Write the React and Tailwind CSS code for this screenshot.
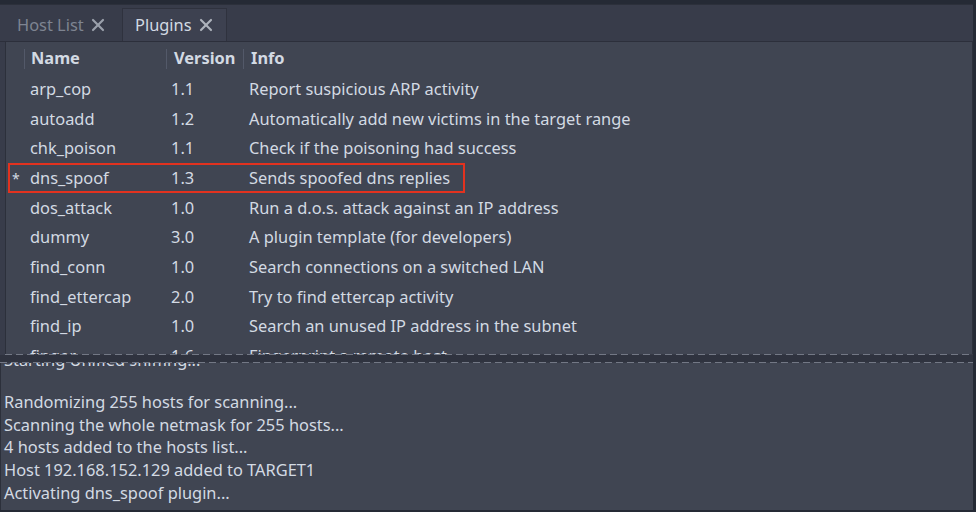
import { X } from 'lucide-react'

const plugins = [
  { name: 'arp_cop', ver: '1.1', info: 'Report suspicious ARP activity' },
  { name: 'autoadd', ver: '1.2', info: 'Automatically add new victims in the target range' },
  { name: 'chk_poison', ver: '1.1', info: 'Check if the poisoning had success' },
  { name: 'dns_spoof', ver: '1.3', info: 'Sends spoofed dns replies', active: true },
  { name: 'dos_attack', ver: '1.0', info: 'Run a d.o.s. attack against an IP address' },
  { name: 'dummy', ver: '3.0', info: 'A plugin template (for developers)' },
  { name: 'find_conn', ver: '1.0', info: 'Search connections on a switched LAN' },
  { name: 'find_ettercap', ver: '2.0', info: 'Try to find ettercap activity' },
  { name: 'find_ip', ver: '1.0', info: 'Search an unused IP address in the subnet' },
  { name: 'finger', ver: '1.6', info: 'Fingerprint a remote host' },
  { name: 'finger_submit', ver: '1.0', info: "Submit a fingerprint to ettercap's website" },
]

const logLines = [
  'Randomizing 255 hosts for scanning...',
  'Scanning the whole netmask for 255 hosts...',
  '4 hosts added to the hosts list...',
  'Host 192.168.152.129 added to TARGET1',
  'Activating dns_spoof plugin...',
]

const dashed = 'h-[1px] shrink-0 bg-[repeating-linear-gradient(90deg,#737885_0px,#737885_7px,#363a46_7px,#363a46_11px)]'

export default function App() {
  return (
    <div className="w-[976px] h-[512px] bg-[#252a35] overflow-hidden text-[#d3dae3] text-[16.4px] font-['Noto_Sans',sans-serif]">
      <div className="mt-[4px] mr-[3px] h-[506px] bg-[#383c4a] flex flex-col">
        {/* tabs */}
        <div className="h-[37px] shrink-0 flex items-end border-t border-[#2c303b]">
          <div className="w-[122px] h-[32px] flex items-center pl-[17px] gap-[4px] text-[#7e8491]">
            <span>Host List</span>
            <X size={20} strokeWidth={2.6} className="text-[#9aa0ab]" />
          </div>
          <div className="w-[105px] h-[33px] flex items-center pl-[12px] gap-[4px] bg-[#3d4150] border border-b-0 border-[#2f323e]">
            <span>Plugins</span>
            <X size={20} strokeWidth={2.6} className="text-[#aeb3bc]" />
          </div>
        </div>
        <div className="h-[1px] shrink-0 bg-[#2c2f3b]" />

        {/* plugin table */}
        <div className="ml-[5px] h-[312px] shrink-0 bg-[#404552] border-l border-r border-[#2c303b] overflow-hidden flex flex-col">
          <div className="h-[32px] pt-[1px] shrink-0 grid grid-cols-[19px_142px_77px_1fr] items-center font-bold">
            <div className="h-[20px] border-r border-[#535969]" />
            <div className="h-[20px] flex items-center pl-[6px] border-r border-[#535969]">Name</div>
            <div className="h-[20px] flex items-center pl-[7px] border-r border-[#535969]">Version</div>
            <div className="h-[20px] flex items-center pl-[7px]">Info</div>
          </div>
          <div className="overflow-hidden flex-1">
            {plugins.map((p) => (
              <div key={p.name} className="relative h-[29.67px] pt-[1px] grid grid-cols-[19px_142px_77px_1fr] items-center whitespace-nowrap">
                <div className="pl-[6px] text-[14px]">{p.active ? '*' : ''}</div>
                <div className="pl-[5px]">{p.name}</div>
                <div className="pl-[4px]">{p.ver}</div>
                <div className="pl-[5px]">{p.info}</div>
                {p.active && (
                  <div className="absolute top-0 left-[2px] w-[457px] h-[30px] border-2 border-[#e2321f]" />
                )}
              </div>
            ))}
          </div>
        </div>
        <div className={`ml-[5px] ${dashed}`} />

        {/* splitter */}
        <div className="h-[7px] shrink-0 bg-[#2f333f]" />
        <div className={dashed} />

        {/* log */}
        <div className="flex-1 bg-[#404552] border-l border-[#2c303b] overflow-hidden pl-[3px]">
          <div className="-mt-[14.5px] h-[22.7px] leading-[22.7px] whitespace-nowrap">Starting Unified sniffing...</div>
          <div className="h-[19.7px]" />
          {logLines.map((l, i) => (
            <div key={i} className="h-[22.7px] leading-[22.7px] whitespace-nowrap">{l}</div>
          ))}
        </div>
      </div>
    </div>
  )
}
